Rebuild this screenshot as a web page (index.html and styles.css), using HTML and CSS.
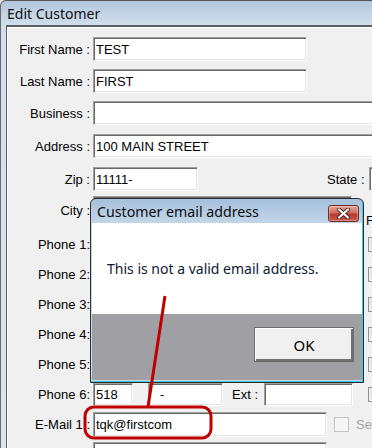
FILE: index.html
```html
<!DOCTYPE html>
<html lang="en">
<head>
  <meta charset="UTF-8" />
  <title>Edit Customer</title>
  <link rel="stylesheet" href="styles.css">
</head>
<body>
  <div class="window">
    <div class="titlebar">Edit Customer</div>
    <div class="client">
      <div class="row">
        <span class="label">First Name :</span>
        <input class="field w-name" value="TEST">
      </div>
      <div class="row">
        <span class="label">Last Name :</span>
        <input class="field w-name" value="FIRST">
      </div>
      <div class="row">
        <span class="label">Business :</span>
        <input class="field w-long" value="">
      </div>
      <div class="row tall">
        <span class="label">Address :</span>
        <input class="field w-long" value="100 MAIN STREET">
      </div>
      <div class="row">
        <span class="label">Zip :</span>
        <input class="field w-zip" value="11111-">
        <span class="state">State :</span>
        <input class="field w-state" value="">
      </div>
      <div class="row tall city">
        <span class="label">City :</span>
        <input class="field w-city" value="">
        <span class="col-head">F</span>
      </div>

      <div class="row phone">
        <span class="label">Phone 1:</span>
        <input class="field w-area" value="">
        <input class="field w-num" value="-">
        <span class="ext">Ext :</span>
        <input class="field w-ext" value="">
        <span class="check"></span>
      </div>
      <div class="row phone">
        <span class="label">Phone 2:</span>
        <input class="field w-area" value="">
        <input class="field w-num" value="-">
        <span class="ext">Ext :</span>
        <input class="field w-ext" value="">
        <span class="check"></span>
      </div>
      <div class="row phone">
        <span class="label">Phone 3:</span>
        <input class="field w-area" value="">
        <input class="field w-num" value="-">
        <span class="ext">Ext :</span>
        <input class="field w-ext" value="">
        <span class="check"></span>
      </div>
      <div class="row phone">
        <span class="label">Phone 4:</span>
        <input class="field w-area" value="">
        <input class="field w-num" value="-">
        <span class="ext">Ext :</span>
        <input class="field w-ext" value="">
        <span class="check"></span>
      </div>
      <div class="row phone">
        <span class="label">Phone 5:</span>
        <input class="field w-area" value="">
        <input class="field w-num" value="-">
        <span class="ext">Ext :</span>
        <input class="field w-ext" value="">
        <span class="check"></span>
      </div>
      <div class="row phone">
        <span class="label">Phone 6:</span>
        <input class="field w-area" value="518">
        <input class="field w-num" value="-">
        <span class="ext">Ext :</span>
        <input class="field w-ext" value="">
        <span class="check"></span>
      </div>

      <div class="row phone">
        <span class="label">E-Mail 1 :</span>
        <input class="field w-mail" value="tqk@firstcom">
        <span class="check disabled"></span>
        <span class="send">Se</span>
      </div>
      <div class="row phone">
        <span class="label"></span>
        <input class="field w-mail" value="">
      </div>
    </div>
  </div>

  <div class="dialog">
    <div class="dlg-title">
      <span>Customer email address</span>
      <span class="close">
        <svg width="13" height="11" viewBox="0 0 13 11">
          <path d="M2 1.5 L11 9.5 M11 1.5 L2 9.5" stroke="#4a2020" stroke-width="4" stroke-linecap="round"/>
          <path d="M2 1.5 L11 9.5 M11 1.5 L2 9.5" stroke="#fff" stroke-width="2.2" stroke-linecap="round"/>
        </svg>
      </span>
    </div>
    <div class="dlg-body">This is not a valid email address.</div>
    <div class="dlg-buttons">
      <button class="ok">OK</button>
    </div>
  </div>

  <svg class="markup" width="372" height="448" viewBox="0 0 372 448">
    <line x1="165" y1="296" x2="148" y2="407" stroke="#c00000" stroke-width="3"/>
    <rect x="85" y="407" width="126" height="31" rx="9" fill="none" stroke="#c00000" stroke-width="3"/>
  </svg>
</body>
</html>
```

FILE: styles.css
```css
body {
  margin: 0;
  width: 372px;
  height: 448px;
  overflow: hidden;
  position: relative;
  font-family: "Liberation Sans", Arial, sans-serif;
  font-size: 13px;
  background-color: #dce6f0;
}

.window {
  height: 100%;
  box-sizing: border-box;
  display: flex;
  flex-direction: column;
  border-left: 1px solid #6b6b6b;
  border-top: 1px solid #555;
  border-top-left-radius: 6px;
  background: linear-gradient(#b2c7dc, #d2dfec 25px, #dbe5ef);
}

.titlebar {
  flex: none;
  height: 24px;
  line-height: 25px;
  padding-left: 6px;
  font-family: "Noto Sans", sans-serif;
  font-size: 14px;
  color: #111;
}

.client {
  flex: 1;
  min-height: 0;
  margin-left: 5px;
  padding: 6px 0 0 1px;
  border-top: 2px solid #5f5f5f;
  border-left: 1px solid #5f5f5f;
  box-shadow: inset 1px 1px 0 #fff;
  background-color: #f0f0f0;
  overflow: hidden;
}

.row {
  display: flex;
  align-items: center;
  height: 32px;
  white-space: nowrap;
}

.row.tall {
  height: 34px;
}

.row.phone {
  height: 30px;
}

.label {
  flex: none;
  width: 82px;
  margin-right: 3px;
  text-align: right;
  color: #000;
}

.field {
  flex: none;
  height: 24px;
  box-sizing: border-box;
  margin: 0;
  padding: 0 2px;
  border: 1px solid;
  border-color: #a0a0a0 #fff #fff #a0a0a0;
  box-shadow: inset 1px 1px 0 #696969, inset -1px -1px 0 #e3e3e3;
  background-color: #fff;
  font-family: "Liberation Sans", Arial, sans-serif;
  font-size: 13px;
  color: #000;
  outline: none;
}

.w-name { width: 214px; }
.w-long { width: 300px; }
.w-zip { width: 105px; }
.w-state { width: 40px; margin-left: 4px; }
.w-city { width: 259px; margin-top: 1px; }
.w-area { width: 40px; height: 23px; }
.w-num { width: 75px; height: 23px; margin-left: 15px; padding-left: 11px; }
.w-ext { width: 89px; height: 23px; }
.w-mail { width: 234px; height: 25px; }

.state {
  margin-left: 129px;
}

.city {
  align-items: flex-start;
}

.city .label {
  padding-top: 8px;
}

.col-head {
  align-self: flex-end;
  margin-left: 14px;
  line-height: 16px;
}

.ext {
  flex: none;
  width: 32px;
  margin-left: 9px;
}

.check {
  flex: none;
  width: 13px;
  height: 13px;
  margin-left: 15px;
  border: 1px solid #8e8f8f;
  background: linear-gradient(135deg, #dcdcdc, #fbfbfb);
  box-shadow: inset 0 0 0 1px #f4f4f4;
}

.check.disabled {
  margin-left: 7px;
  border-color: #c4c4c4;
  background: #f4f4f4;
  box-shadow: none;
}

.send {
  margin-left: 7px;
  color: #a3a3a3;
}

/* message box */
.dialog {
  position: absolute;
  left: 90px;
  top: 198px;
  width: 274px;
  height: 185px;
  box-sizing: border-box;
  border: 1px solid #2e2e2e;
  border-radius: 6px 6px 0 0;
  padding: 0 1px 2px 1px;
  background: linear-gradient(#a6c0db, #c4d7ea 25px, #c8dcee);
  box-shadow: inset -1px -1px 0 #3cc6ee;
  display: flex;
  flex-direction: column;
  font-family: "Noto Sans", sans-serif;
}

.dlg-title {
  height: 24px;
  display: flex;
  align-items: center;
  justify-content: space-between;
  padding-left: 5px;
  font-size: 14.2px;
  color: #0b0b0b;
}

.close {
  width: 29px;
  height: 15px;
  margin-right: 3px;
  margin-top: 4px;
  display: flex;
  align-items: center;
  justify-content: center;
  border: 1px solid #6e2a22;
  border-radius: 3px;
  background: linear-gradient(#e3a699, #cd6a5c 45%, #b83a2a 55%, #c9574a);
  box-shadow: inset 0 0 0 1px rgba(255,255,255,0.35);
}

.dlg-body {
  height: 91px;
  box-sizing: border-box;
  padding: 36px 0 0 15px;
  background-color: #fff;
  font-size: 14px;
  line-height: 20px;
  color: #0d1a33;
}

.dlg-buttons {
  flex: 1;
  display: flex;
  justify-content: flex-end;
  align-items: flex-start;
  padding: 13px 8px 0 0;
  background-color: #a0a0a4;
}

.ok {
  width: 100px;
  height: 35px;
  border: 1px solid #6b6b6b;
  background-color: #f0f0f0;
  box-shadow: inset 1px 1px 0 #fff, inset -2px -2px 0 #707070;
  font-family: "Noto Sans", sans-serif;
  font-size: 15px;
  color: #000;
  padding: 0;
}

.markup {
  position: absolute;
  left: 0;
  top: 0;
  pointer-events: none;
}
```
